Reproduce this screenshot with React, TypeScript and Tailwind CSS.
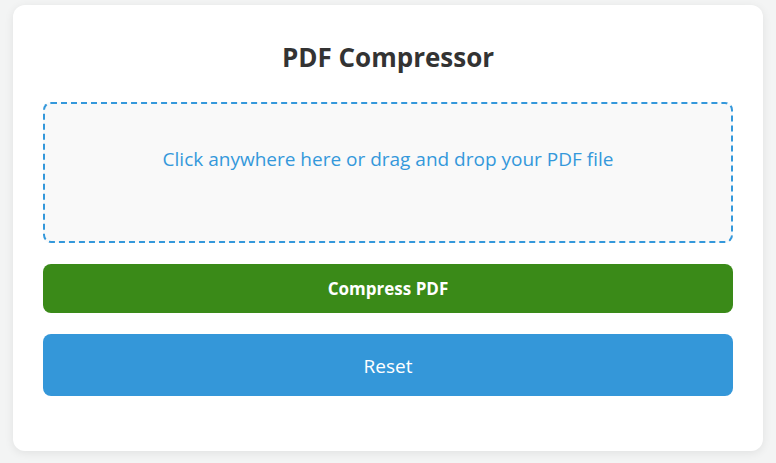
export default function App() {
  return (
    <div
      className="min-h-[463px] bg-[#f3f4f4] pt-[5px]"
      style={{ fontFamily: '"Open Sans", "Noto Sans", sans-serif' }}
    >
      <div className="mx-auto w-[750px] h-[446px] rounded-[12px] bg-white px-[30px] pt-[36px] shadow-[0_2px_10px_rgba(0,0,0,0.08)]">
        <h1 className="text-center text-[26px] font-bold leading-[32px] text-[#333]">
          PDF Compressor
        </h1>

        <div className="mt-[29px] flex h-[141px] cursor-pointer items-center justify-center rounded-[8px] border-2 border-dashed border-[#3498db] bg-[#f9f9f9] pb-[26px]">
          <span className="text-[19px] text-[#3498db]">
            Click anywhere here or drag and drop your PDF file
          </span>
        </div>

        <button className="mt-[21px] flex h-[49px] w-full items-center justify-center rounded-[8px] bg-[#3a8a18] text-[17px] font-bold text-white">
          Compress PDF
        </button>

        <button className="mt-[21px] flex h-[62px] w-full items-center justify-center rounded-[8px] bg-[#3497d9] pt-[2px] text-[19px] text-white">
          Reset
        </button>
      </div>
    </div>
  )
}
